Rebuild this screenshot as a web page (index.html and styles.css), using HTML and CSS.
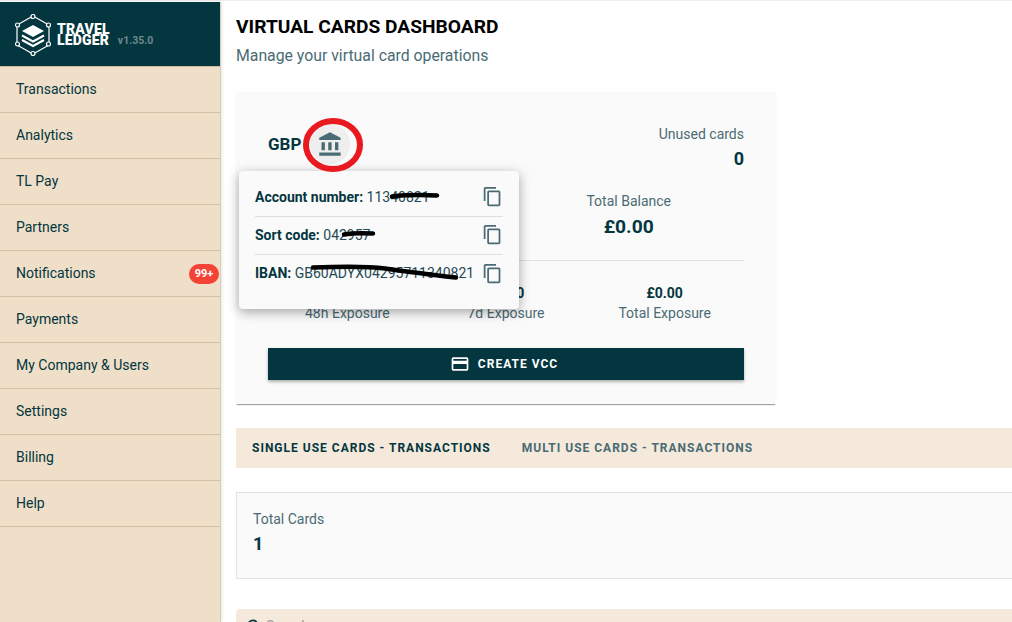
FILE: index.html
```html
<!DOCTYPE html>
<html lang="en">
<head>
<meta charset="utf-8">
<title>Virtual Cards Dashboard</title>
<link rel="stylesheet" href="styles.css">
</head>
<body>
<div class="app">
  <aside class="sidebar">
    <div class="brand">
      <svg class="logo" width="36" height="42" viewBox="0 0 36 42" fill="none">
        <path d="M18 2 34 11V31L18 40 2 31V11Z" stroke="#fff" stroke-width="1.2"/>
        <g fill="#03363f" stroke="#fff" stroke-width="1.2"><circle cx="18" cy="2.5" r="2"/><circle cx="33.5" cy="11" r="2"/><circle cx="33.5" cy="30" r="2"/><circle cx="18" cy="39.500" r="2"/><circle cx="2.500" cy="30" r="2"/><circle cx="2.500" cy="11" r="2"/></g>
        <path d="M18 11 29 17 18 23 7 17Z" fill="#fff"/>
        <path d="M7 21.500 18 27.500 29 21.500M7 26 18 32 29 26" stroke="#fff" stroke-width="2"/>
      </svg>
      <div class="wordmark">TRAVEL<br>LEDGER</div>
      <div class="version">v1.35.0</div>
    </div>
    <nav class="menu">
      <a class="item">Transactions</a>
      <a class="item">Analytics</a>
      <a class="item">TL Pay</a>
      <a class="item">Partners</a>
      <a class="item">Notifications<span class="badge">99+</span></a>
      <a class="item">Payments</a>
      <a class="item">My Company &amp; Users</a>
      <a class="item">Settings</a>
      <a class="item">Billing</a>
      <a class="item">Help</a>
    </nav>
  </aside>
  <main class="main">
    <h1 class="title">VIRTUAL CARDS DASHBOARD</h1>
    <p class="subtitle">Manage your virtual card operations</p>

    <section class="card">
      <div class="card-top">
        <div class="currency">
          <span class="code">GBP</span>
          <span class="bank">
            <svg width="27" height="27" viewBox="0 0 24 24" fill="#4a6b74"><path d="M4 10v7h3v-7H4zm6 0v7h3v-7h-3zM2 22h19v-3H2v3zm14-12v7h3v-7h-3zM11.500 1 2 6v2h19V6l-9.500-5z"/></svg>
          </span>
        </div>
        <div class="unused">
          <div class="label">Unused cards</div>
          <div class="unused-value">0</div>
        </div>
      </div>
      <div class="balance-row">
        <div class="balance">
          <div class="label">Total Balance</div>
          <div class="balance-value">£0.00</div>
        </div>
      </div>
      <div class="exposure-row">
        <div class="exposure"><div class="exposure-value">£0.00</div><div class="label">48h Exposure</div></div>
        <div class="exposure"><div class="exposure-value">£0.00</div><div class="label">7d Exposure</div></div>
        <div class="exposure"><div class="exposure-value">£0.00</div><div class="label">Total Exposure</div></div>
      </div>
      <button class="create">
        <svg width="20" height="20" viewBox="0 0 24 24" fill="#fff"><path d="M20 4H4c-1.100 0-2 .9-2 2v12c0 1.100.9 2 2 2h16c1.100 0 2-.9 2-2V6c0-1.100-.9-2-2-2zm0 14H4v-6h16v6zm0-10H4V6h16v2z"/></svg>
        CREATE VCC
      </button>

      <div class="popover">
        <div class="pop-row">
          <span class="pop-text"><b>Account number:</b> 11340821</span>
          <svg class="copy" width="21" height="21" viewBox="0 0 24 24" fill="#4a6b74"><path d="M16 1H4c-1.100 0-2 .9-2 2v14h2V3h12V1zm3 4H8c-1.100 0-2 .9-2 2v14c0 1.100.9 2 2 2h11c1.100 0 2-.9 2-2V7c0-1.100-.9-2-2-2zm0 16H8V7h11v14z"/></svg>
        </div>
        <div class="pop-row">
          <span class="pop-text"><b>Sort code:</b> 042957</span>
          <svg class="copy" width="21" height="21" viewBox="0 0 24 24" fill="#4a6b74"><path d="M16 1H4c-1.100 0-2 .9-2 2v14h2V3h12V1zm3 4H8c-1.100 0-2 .9-2 2v14c0 1.100.9 2 2 2h11c1.100 0 2-.9 2-2V7c0-1.100-.9-2-2-2zm0 16H8V7h11v14z"/></svg>
        </div>
        <div class="pop-row">
          <span class="pop-text"><b>IBAN:</b> GB60ADYX04295711340821</span>
          <svg class="copy" width="21" height="21" viewBox="0 0 24 24" fill="#4a6b74"><path d="M16 1H4c-1.100 0-2 .9-2 2v14h2V3h12V1zm3 4H8c-1.100 0-2 .9-2 2v14c0 1.100.9 2 2 2h11c1.100 0 2-.9 2-2V7c0-1.100-.9-2-2-2zm0 16H8V7h11v14z"/></svg>
        </div>
      </div>
    </section>

    <div class="tabs">
      <span class="tab active">SINGLE USE CARDS - TRANSACTIONS</span>
      <span class="tab">MULTI USE CARDS - TRANSACTIONS</span>
    </div>

    <section class="total">
      <div class="label">Total Cards</div>
      <div class="total-value">1</div>
    </section>

    <div class="search">
      <svg width="20" height="20" viewBox="0 0 24 24" fill="#03363f"><path d="M15.500 14h-.79l-.28-.27A6.470 6.470 0 0 0 16 9.500 6.500 6.500 0 1 0 9.500 16c1.610 0 3.090-.59 4.230-1.570l.27.28v.79l5 4.990L20.490 19l-4.990-5zm-6 0C7.010 14 5 11.990 5 9.500S7.010 5 9.500 5 14 7.010 14 9.500 11.990 14 9.500 14z"/></svg>
      <span class="search-text">Search</span>
    </div>
  </main>
</div>

<svg class="markup" width="1012" height="622" viewBox="0 0 1012 622" fill="none">
  <ellipse cx="333" cy="145" rx="27" ry="24" stroke="#e8191f" stroke-width="6"/>
  <path d="M392 196.500C405 195 425 195 437 195.500" stroke="#000" stroke-width="4.500" stroke-linecap="round"/>
  <path d="M344 234.500C352 233 362 233 373 233.500" stroke="#000" stroke-width="4.500" stroke-linecap="round"/>
  <path d="M313 267.500C340 266.500 370 266.500 385 268.500C410 272 440 276 456 277.500" stroke="#000" stroke-width="4.500" stroke-linecap="round"/>
</svg>
</body>
</html>
```

FILE: styles.css
```css
* { box-sizing: border-box; }
html, body { margin: 0; height: 100%; }
body {
  position: relative;
  width: 1012px;
  height: 622px;
  overflow: hidden;
  background: #fff;
  font-family: Roboto, "Liberation Sans", sans-serif;
  color: #03363f;
}
.app {
  display: flex;
  height: 622px;
  padding-top: 2px;
  overflow: hidden;
  box-shadow: inset 0 1px #ececec;
}

.sidebar {
  flex: 0 0 221px;
  background: #efdfc8;
  border-right: 1px solid #d6cdb6;
  box-shadow: 1px 0 3px rgba(0,0,0,.1);
}
.brand {
  display: flex;
  align-items: center;
  height: 65px;
  padding: 0 0 0 15px;
  background: #03363f;
  border-bottom: 1px solid #c9bc9f;
}
.logo { flex: none; margin-top: 2px; }
.wordmark {
  margin-left: 6px;
  margin-top: 2px;
  color: #fff;
  font-size: 14px;
  font-weight: 900;
  line-height: 11px;
  letter-spacing: .2px;
}
.version {
  margin: 12px 0 0 8px;
  color: #6e8a90;
  font-size: 10.500px;
  font-weight: 700;
}
.menu { display: flex; flex-direction: column; }
.item {
  display: flex;
  align-items: center;
  justify-content: space-between;
  height: 46px;
  padding: 0 1px 2px 16px;
  border-bottom: 1px solid #cfc1a3;
  font-size: 14px;
  color: #03363f;
}
.badge {
  width: 30px;
  height: 20px;
  margin-top: 2px;
  border-radius: 10px;
  background: #f44336;
  color: #fff;
  font-size: 11px;
  font-weight: 700;
  line-height: 20px;
  text-align: center;
}

.main { flex: 1; min-width: 0; padding: 13px 0 0 15px; }
.title {
  margin: 0;
  font-size: 19.200px;
  font-weight: 700;
  line-height: 24px;
  color: #000;
}
.subtitle {
  margin: 6px 0 0;
  font-size: 15.800px;
  line-height: 22px;
  color: #4a6b74;
}

.card {
  position: relative;
  width: 540px;
  height: 312px;
  margin-top: 25px;
  padding: 30px 32px 0;
  background: #fafafa;
  box-shadow: 0 2px 1px -1px rgba(0,0,0,.3), 0 1px 1px rgba(0,0,0,.08);
}
.card-top { display: flex; justify-content: space-between; }
.currency { display: flex; align-items: center; margin-top: 4px; height: 36px; }
.code { font-size: 17px; font-weight: 700; }
.bank {
  display: flex;
  align-items: center;
  justify-content: center;
  width: 40px;
  height: 40px;
  margin-left: 9px;
  border-radius: 50%;
  background: #eeeeee;
}
.label { font-size: 14px; line-height: 20px; color: #4a6b74; }
.unused { text-align: right; margin-top: 2px; }
.unused-value { margin-top: 4px; font-size: 18px; font-weight: 700; line-height: 22px; }
.balance-row {
  display: flex;
  justify-content: flex-end;
  margin-top: 21px;
  padding: 0 73px 20px 0;
  border-bottom: 1px solid #e0e0e0;
}
.balance { text-align: center; }
.balance-value { margin-top: 3px; font-size: 19.200px; font-weight: 700; line-height: 26px; }
.exposure-row { display: grid; grid-template-columns: repeat(3, 1fr); margin-top: 23px; }
.exposure { text-align: center; }
.exposure-value { margin-bottom: 1px; font-size: 14px; font-weight: 700; line-height: 18px; }
.create {
  display: flex;
  align-items: center;
  justify-content: center;
  gap: 8px;
  width: 100%;
  height: 32px;
  margin-top: 25px;
  padding: 0 4px 0 0;
  border: 0;
  background: #03363f;
  color: #fff;
  font: 700 12px Roboto, sans-serif;
  letter-spacing: 1px;
  box-shadow: 0 2px 3px rgba(0,0,0,.3);
}

.popover {
  position: absolute;
  left: 3px;
  top: 79px;
  width: 280px;
  height: 138px;
  padding: 8px 16px 0;
  background: #fafafa;
  border-radius: 4px;
  box-shadow: 0 3px 12px rgba(0,0,0,.35);
}
.pop-row {
  display: flex;
  align-items: center;
  justify-content: space-between;
  height: 38px;
  padding-bottom: 2px;
  border-bottom: 1px solid #d9e1e1;
  font-size: 14px;
}
.pop-row:last-child { border-bottom: 0; }
.pop-text { color: #1f4a54; white-space: nowrap; }
.pop-text b { color: #03363f; font-weight: 700; }
.copy { flex: none; }

.tabs {
  display: flex;
  align-items: center;
  gap: 31px;
  height: 40px;
  margin-top: 24px;
  padding-left: 16px;
  background: #f4e9db;
}
.tab {
  font-size: 12px;
  font-weight: 700;
  letter-spacing: 1px;
  color: #4a6b74;
}
.tab.active { color: #03363f; }

.total {
  height: 87px;
  margin-top: 24px;
  padding: 16px 16px;
  background: #fafafa;
  border: 1px solid #dde3e3;
  border-right: 0;
}
.total-value { margin-top: 4px; font-size: 18px; font-weight: 700; line-height: 22px; }

.search {
  display: flex;
  align-items: flex-start;
  gap: 1px;
  height: 48px;
  margin-top: 30px;
  padding: 8px 0 0 9px;
  background: #f4e9db;
  border-radius: 4px 0 0 0;
  color: #9e9e9e;
  font-size: 14px;
}
.search-text { margin-top: 2px; line-height: 14px; }

.markup { position: absolute; left: 0; top: 0; pointer-events: none; }
```
